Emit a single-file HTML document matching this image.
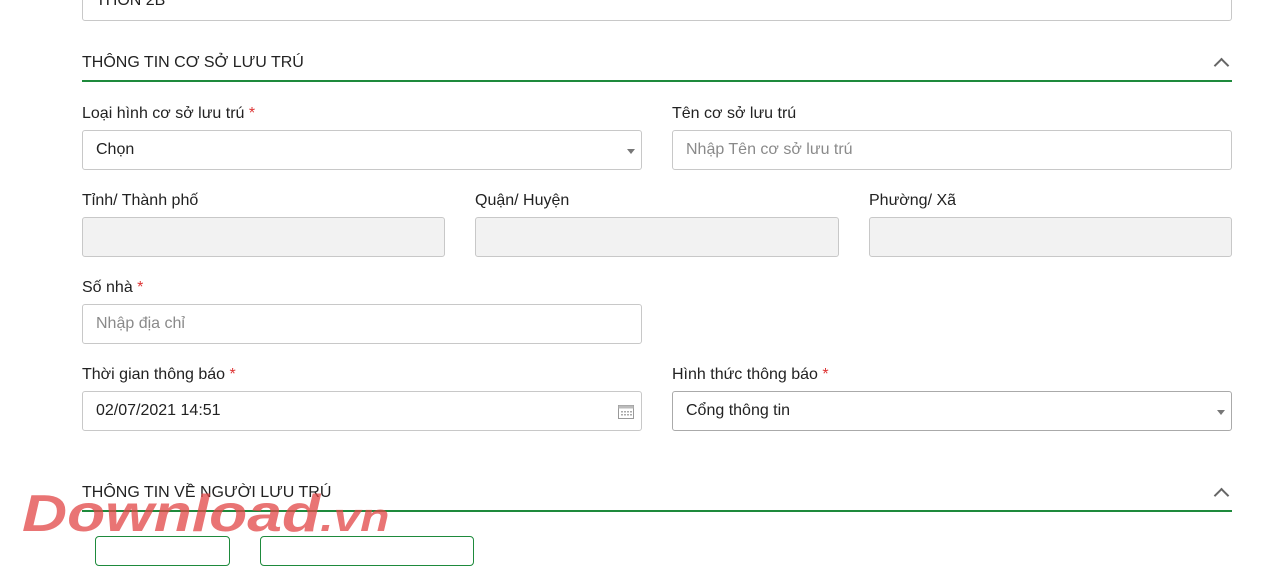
<!DOCTYPE html>
<html><head><meta charset="utf-8"><style>
body{margin:0;width:1272px;height:548px;overflow:hidden;background:#fff;font-family:"Liberation Sans",sans-serif;color:#222;position:relative}
.a{position:absolute}
.inp{position:absolute;box-sizing:border-box;border:1px solid #c8c8c8;border-radius:3px;background:#fff;height:40px;font-size:16px;padding-left:13px;line-height:38px;color:#222}
.dis{background:#f2f2f2}
.ph{color:#8a8a8a}
.lbl{position:absolute;font-size:16px;color:#222}
.r{color:#d33}
.h{position:absolute;font-size:16px;color:#222;left:82px}
.line{position:absolute;left:82px;width:1150px;height:2px;background:#1e8a3c}
.chev{position:absolute;left:1216px;width:9px;height:9px;border-left:2px solid #666;border-top:2px solid #666;transform:rotate(45deg)}
.caret{position:absolute;right:6px;top:18px;width:0;height:0;border-left:4px solid transparent;border-right:4px solid transparent;border-top:5px solid #777}
.btn{position:absolute;top:536px;height:30px;border:1px solid #1e8a3c;border-radius:4px;box-sizing:border-box}
</style></head><body>
<div class="inp" style="left:82px;top:-19px;width:1150px">THÔN 2B</div>
<div class="h" style="top:54px">THÔNG TIN CƠ SỞ LƯU TRÚ</div>
<div class="chev" style="top:60px"></div>
<div class="line" style="top:80px"></div>

<div class="lbl" style="left:82px;top:105px">Loại hình cơ sở lưu trú <span class="r">*</span></div>
<div class="inp" style="left:82px;top:130px;width:560px">Chọn<div class="caret"></div></div>
<div class="lbl" style="left:672px;top:105px">Tên cơ sở lưu trú</div>
<div class="inp ph" style="left:672px;top:130px;width:560px">Nhập Tên cơ sở lưu trú</div>

<div class="lbl" style="left:82px;top:192px">Tỉnh/ Thành phố</div>
<div class="inp dis" style="left:82px;top:217px;width:363px"></div>
<div class="lbl" style="left:475px;top:192px">Quận/ Huyện</div>
<div class="inp dis" style="left:475px;top:217px;width:364px"></div>
<div class="lbl" style="left:869px;top:192px">Phường/ Xã</div>
<div class="inp dis" style="left:869px;top:217px;width:363px"></div>

<div class="lbl" style="left:82px;top:279px">Số nhà <span class="r">*</span></div>
<div class="inp ph" style="left:82px;top:304px;width:560px">Nhập địa chỉ</div>

<div class="lbl" style="left:82px;top:366px">Thời gian thông báo <span class="r">*</span></div>
<div class="inp" style="left:82px;top:391px;width:560px">02/07/2021 14:51
<svg class="a" style="right:7px;top:12px" width="16" height="15" viewBox="0 0 16 15"><rect x="0.5" y="1.5" width="15" height="13" fill="none" stroke="#999"/><rect x="0.5" y="1.5" width="15" height="3" fill="#bbb"/><g fill="#aaa"><rect x="3" y="7" width="2" height="1.5"/><rect x="6" y="7" width="2" height="1.5"/><rect x="9" y="7" width="2" height="1.5"/><rect x="12" y="7" width="2" height="1.5"/><rect x="3" y="10" width="2" height="1.5"/><rect x="6" y="10" width="2" height="1.5"/><rect x="9" y="10" width="2" height="1.5"/><rect x="12" y="10" width="2" height="1.5"/></g></svg></div>
<div class="lbl" style="left:672px;top:366px">Hình thức thông báo <span class="r">*</span></div>
<div class="inp" style="left:672px;top:391px;width:560px;border-color:#aaa">Cổng thông tin<div class="caret"></div></div>

<div class="h" style="top:484px">THÔNG TIN VỀ NGƯỜI LƯU TRÚ</div>
<div class="chev" style="top:490px"></div>
<div class="line" style="top:510px"></div>
<div class="btn" style="left:95px;width:135px"></div>
<div class="btn" style="left:260px;width:214px"></div>
<div class="a" style="left:22px;top:486px;font-size:52px;font-weight:bold;font-style:italic;color:rgba(225,70,70,0.75);letter-spacing:0px;line-height:56px;transform:scaleX(1.2);transform-origin:left top;white-space:nowrap">Download<span style="font-size:40px">.vn</span></div>
</body></html>
